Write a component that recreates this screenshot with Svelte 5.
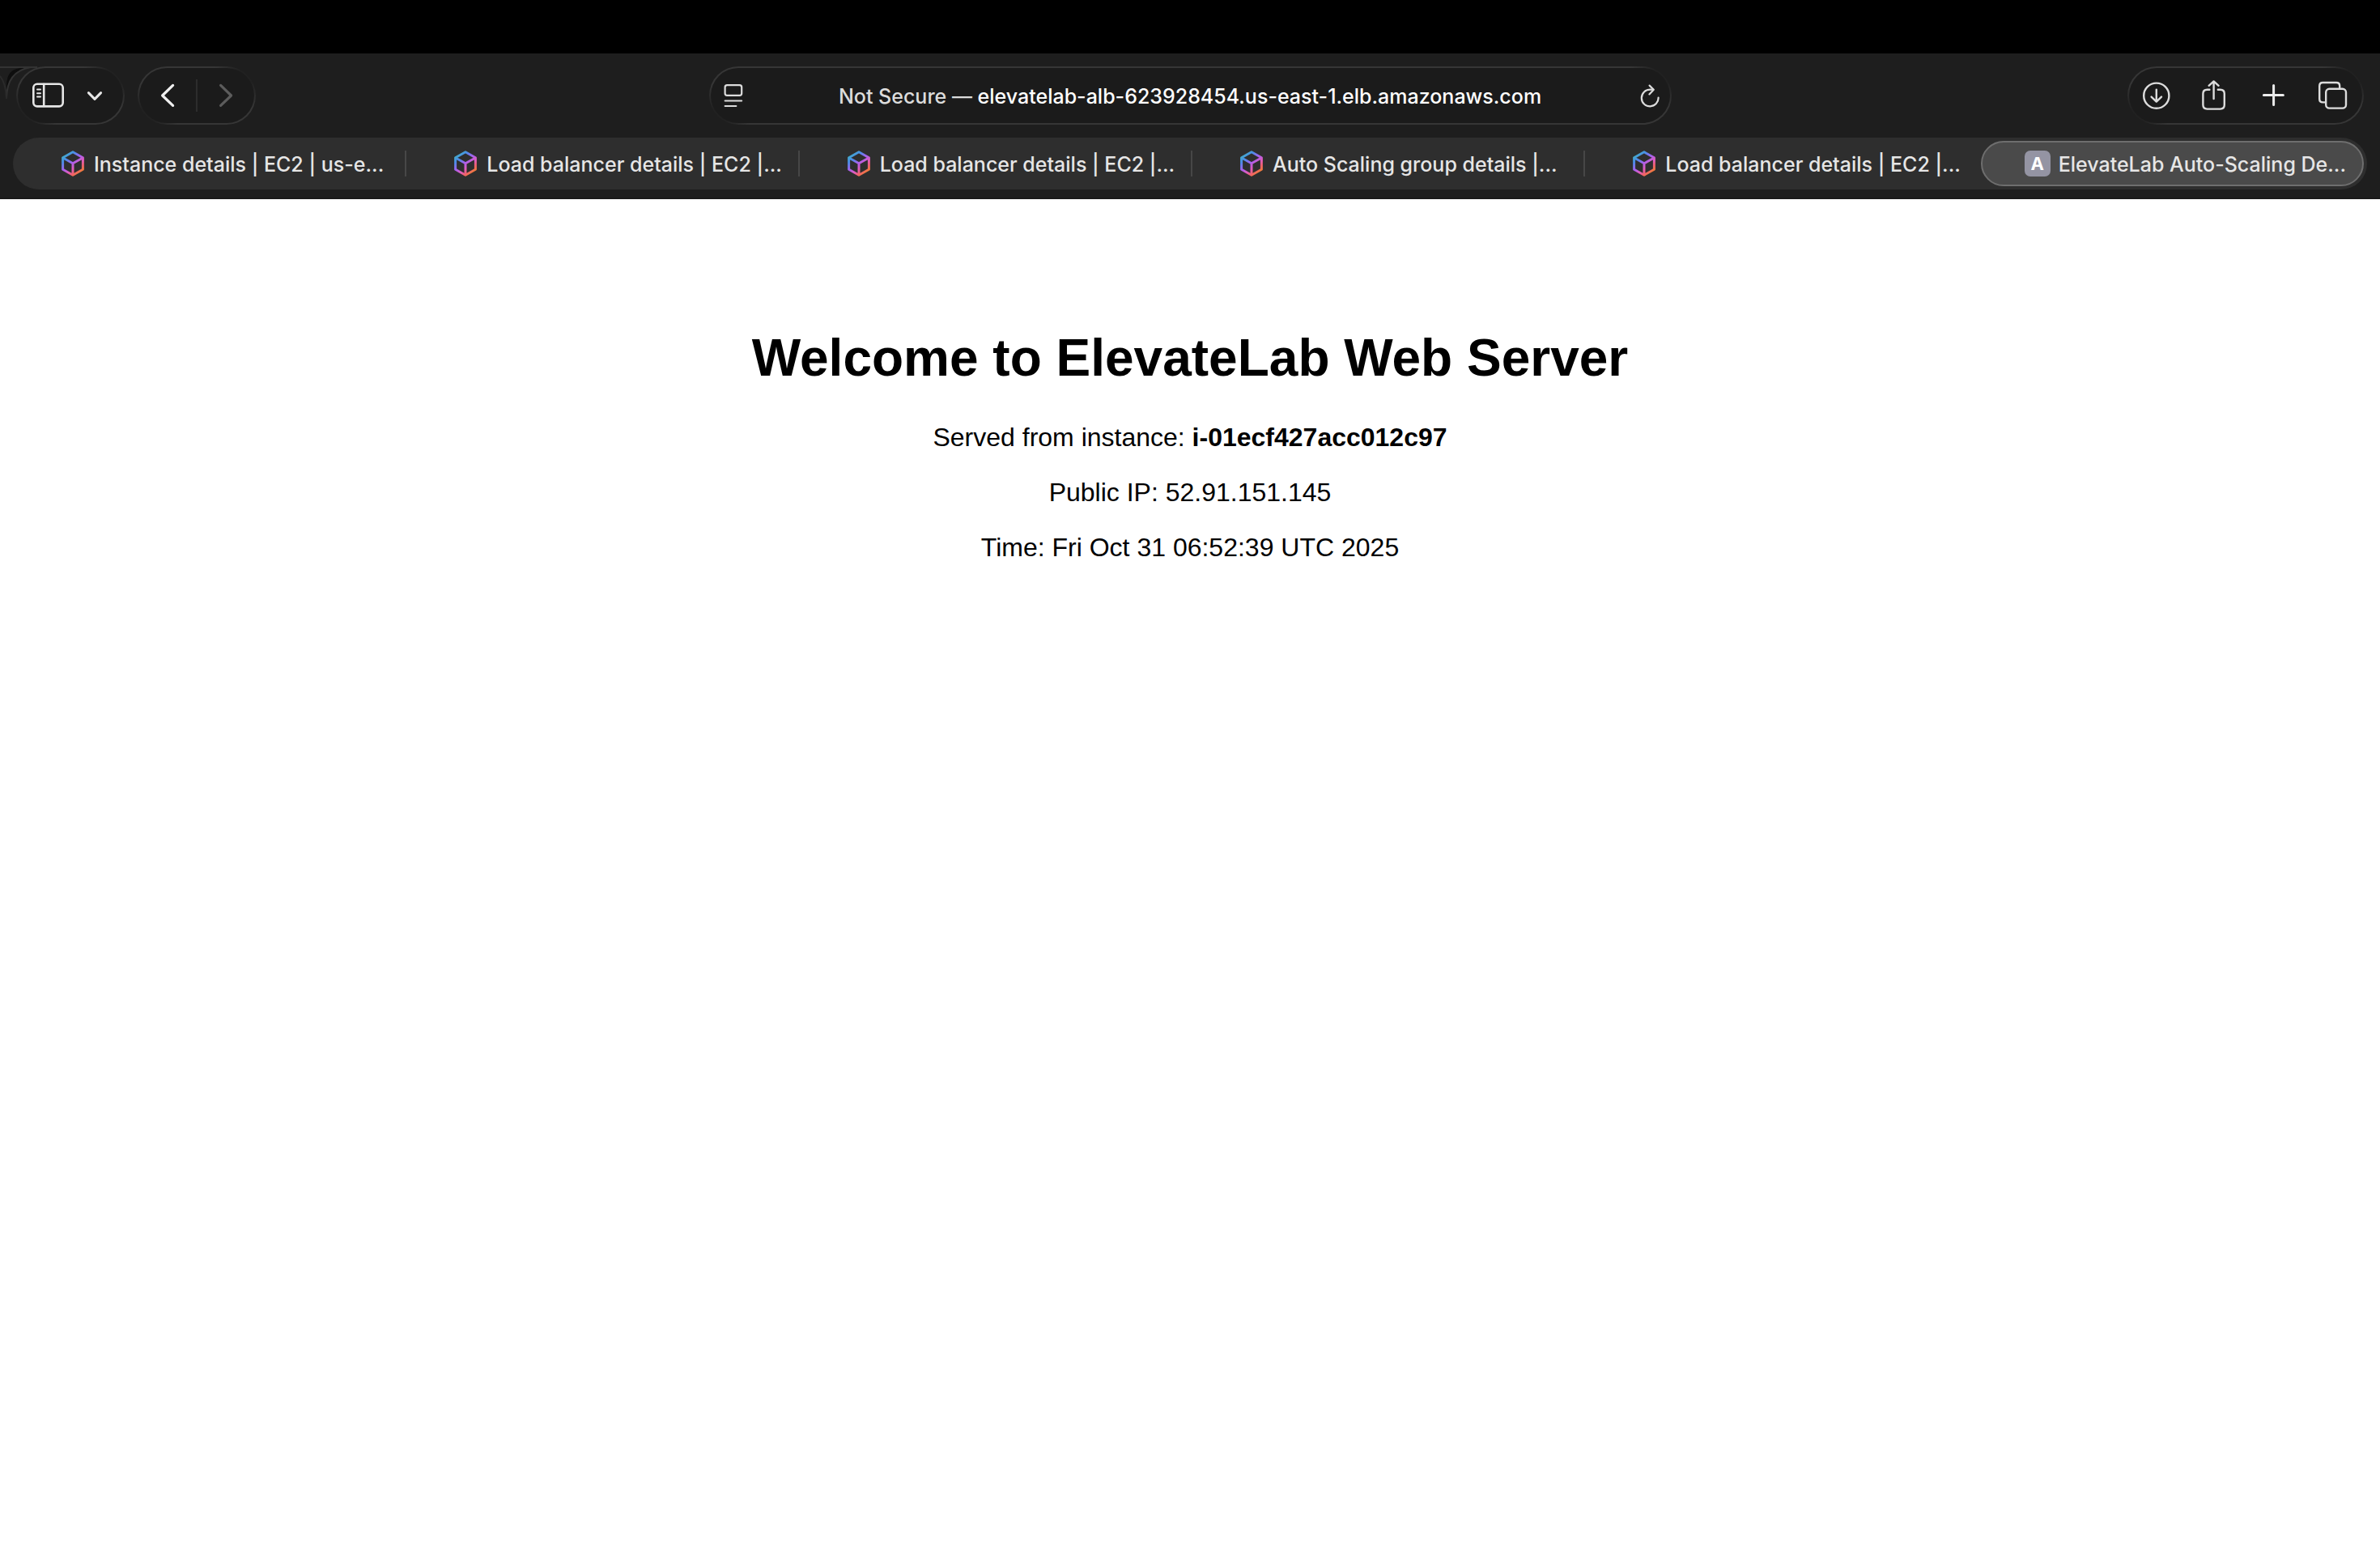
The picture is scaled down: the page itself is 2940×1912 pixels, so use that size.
<script>
  const tabs = [
    { title: 'Instance details | EC2 | us-e...', kind: 'aws' },
    { title: 'Load balancer details | EC2 |...', kind: 'aws' },
    { title: 'Load balancer details | EC2 |...', kind: 'aws' },
    { title: 'Auto Scaling group details |...', kind: 'aws' },
    { title: 'Load balancer details | EC2 |...', kind: 'aws' },
    { title: 'ElevateLab Auto-Scaling De...', kind: 'letter' },
  ];
  let active = $state(5);
</script>

<svelte:head><title>ElevateLab Auto-Scaling Demo</title></svelte:head>

<div class="window">
  <div class="menubar"></div>
  <header class="chrome">
    <svg class="edge" viewBox="0 0 50 72" aria-hidden="true">
      <path d="M8 24Q8 2 28 2H34Q14 8 8 30Z" fill="#0e0e0e" />
      <path d="M0 1H46M8 40Q8 6 38 1" fill="none" stroke="#333" stroke-width="2" />
      <path d="M0 12Q7 20 8 40" fill="none" stroke="#2a2a2a" stroke-width="2" />
    </svg>
    <div class="toolbar">
      <div class="side">
        <div class="pill">
          <button class="tool" aria-label="Show sidebar">
            <svg width="72" height="68" viewBox="0 0 72 68">
              <g fill="none" stroke="#e6e6e6" stroke-width="2.6" stroke-linecap="round">
                <rect x="19.3" y="19.8" width="36.4" height="27.6" rx="4.6" />
                <path d="M32.2 20V47" />
                <path d="M24 26.6H28M24 31.2H28M24 35.6H28" stroke-width="2" />
              </g>
            </svg>
          </button>
          <button class="tool narrow" aria-label="Tab groups">
            <svg width="58" height="68" viewBox="0 0 58 68">
              <path d="M15.4 30.6L23 38.4L30.6 30.6" fill="none" stroke="#e6e6e6" stroke-width="3" stroke-linecap="round" stroke-linejoin="round" />
            </svg>
          </button>
        </div>
        <div class="pill">
          <button class="tool nav" aria-label="Back">
            <svg width="70" height="68" viewBox="0 0 70 68">
              <path d="M41.6 21.4L28.6 34L41.6 46.4" fill="none" stroke="#f0f0f0" stroke-width="3.2" stroke-linecap="round" stroke-linejoin="round" />
            </svg>
          </button>
          <span class="rule"></span>
          <button class="tool nav" aria-label="Forward" disabled>
            <svg width="70" height="68" viewBox="0 0 70 68">
              <path d="M28.6 21.4L41.6 34L28.6 46.4" fill="none" stroke="#5c5c5c" stroke-width="3.2" stroke-linecap="round" stroke-linejoin="round" />
            </svg>
          </button>
        </div>
      </div>

      <div class="pill address">
        <button class="tool small" aria-label="Page menu">
          <svg width="58" height="68" viewBox="0 0 58 68">
            <g fill="none" stroke="#dcdcdc" stroke-width="2.2" stroke-linecap="round">
              <rect x="17.6" y="21.2" width="20.6" height="12.6" rx="2.6" />
              <path d="M17.6 40.6H38.2M17.6 47H31.4" stroke-width="2" />
            </g>
          </svg>
        </button>
        <button class="url"><span class="insecure">Not Secure —</span> elevatelab-alb-623928454.us-east-1.elb.amazonaws.com</button>
        <button class="tool small" aria-label="Reload">
          <svg width="58" height="68" viewBox="0 0 58 68">
            <g fill="none" stroke="#dcdcdc" stroke-width="2.2" stroke-linecap="round" stroke-linejoin="round">
              <path d="M43.6 36.6A10.4 10.4 0 1 1 33.2 26.6H37" />
              <path d="M32.6 21.6L37.8 26.8L32.4 32.4" />
            </g>
          </svg>
        </button>
      </div>

      <div class="side end">
        <div class="pill">
          <button class="tool" aria-label="Downloads">
            <svg width="72" height="68" viewBox="0 0 72 68">
              <g fill="none" stroke="#dcdcdc" stroke-width="2.4" stroke-linecap="round" stroke-linejoin="round">
                <circle cx="33.8" cy="34.2" r="15.6" />
                <path d="M33.8 26.6V41M27.6 35.6L33.8 41.6L40 35.6" />
              </g>
            </svg>
          </button>
          <button class="tool" aria-label="Share">
            <svg width="72" height="68" viewBox="0 0 72 68">
              <g fill="none" stroke="#dcdcdc" stroke-width="2.4" stroke-linecap="round" stroke-linejoin="round">
                <path d="M27.4 26.8H24.4Q19.4 26.8 19.4 31.8V45.6Q19.4 50.6 24.4 50.6H40.8Q45.8 50.6 45.8 45.6V31.8Q45.8 26.8 40.8 26.8H37.8" />
                <path d="M32.6 38V16.6M26.6 21.8L32.6 16.4L38.6 21.8" />
              </g>
            </svg>
          </button>
          <button class="tool" aria-label="New tab">
            <svg width="72" height="68" viewBox="0 0 72 68">
              <path d="M22.4 33.4H46.4M34.6 21.4V45.4" fill="none" stroke="#ececec" stroke-width="3" stroke-linecap="round" />
            </svg>
          </button>
          <button class="tool" aria-label="Tab overview">
            <svg width="72" height="68" viewBox="0 0 72 68">
              <g fill="none" stroke="#dcdcdc" stroke-width="2.4" stroke-linecap="round">
                <path d="M26 42.4H23.4Q19.2 42.4 19.2 38.2V22.2Q19.2 18 23.4 18H40Q44.2 18 44.2 22.2V24.4" />
                <rect x="27.2" y="25.8" width="24.8" height="23.8" rx="4.2" />
              </g>
            </svg>
          </button>
        </div>
      </div>
    </div>

    <nav class="tabs" aria-label="Tabs">
      {#each tabs as tab, i}
        {#if i > 0}
          <span class="divider" class:hidden={i === active || i - 1 === active}></span>
        {/if}
        <button class="tab" class:active={i === active} onclick={() => (active = i)}>
          {#if tab.kind === 'aws'}
            <svg class="favicon" viewBox="0 0 32 32" aria-hidden="true">
              <defs>
                <linearGradient id="cube{i}" x1="5" y1="3" x2="25" y2="27" gradientUnits="userSpaceOnUse">
                  <stop offset="0" stop-color="#41b8c0" />
                  <stop offset="0.25" stop-color="#4a8ce8" />
                  <stop offset="0.5" stop-color="#a860ee" />
                  <stop offset="0.7" stop-color="#e05cc0" />
                  <stop offset="0.85" stop-color="#ee6070" />
                  <stop offset="1" stop-color="#f07a3c" />
                </linearGradient>
              </defs>
              <path d="M16 1.8L28.4 8.8V23.2L16 30.2L3.6 23.2V8.8ZM3.8 9L16 15.8L28.2 9M16 15.8V30" fill="none" stroke="url(#cube{i})" stroke-width="3" stroke-linejoin="round" />
            </svg>
          {:else}
            <span class="letter">A</span>
          {/if}
          <span class="title">{tab.title}</span>
        </button>
      {/each}
    </nav>
  </header>

  <main>
    <h1>Welcome to ElevateLab Web Server</h1>
    <p>Served from instance: <strong>i-01ecf427acc012c97</strong></p>
    <p>Public IP: 52.91.151.145</p>
    <p>Time: Fri Oct 31 06:52:39 UTC 2025</p>
  </main>
</div>

<style>
  :global(body) {
    margin: 0;
    background: #fff;
  }
  .window {
    min-height: 100vh;
    background: #fff;
  }
  .menubar {
    height: 66px;
    background: #000;
  }
  .chrome {
    position: relative;
    padding: 16px 16px 10px;
    background: #1e1e1e;
    border-bottom: 2px solid #191919;
    font-family: Inter, 'Liberation Sans', sans-serif;
    font-weight: 500;
  }
  .edge {
    position: absolute;
    left: 0;
    top: 16px;
    width: 50px;
    height: 72px;
  }
  button {
    margin: 0;
    padding: 0;
    border: 0;
    background: none;
    color: inherit;
    font: inherit;
  }
  svg {
    display: block;
  }
  .toolbar {
    position: relative;
    display: grid;
    grid-template-columns: minmax(0, 1fr) 41% minmax(0, 1fr);
    padding: 0 4px;
  }
  .side {
    display: flex;
    gap: 16px;
  }
  .end {
    justify-content: flex-end;
  }
  .pill {
    display: flex;
    align-items: center;
    height: 68px;
    border: 2px solid transparent;
    border-radius: 36px;
    background:
      linear-gradient(#1b1b1b, #1b1b1b) padding-box,
      radial-gradient(circle at 100% 0, #212121 20px, transparent 50px) border-box,
      radial-gradient(circle at 0 100%, #212121 20px, transparent 50px) border-box,
      linear-gradient(#363636, #363636) border-box;
  }
  .tool {
    flex: none;
    width: 72px;
    height: 68px;
  }
  .narrow,
  .small {
    width: 58px;
  }
  .nav {
    width: 70px;
  }
  .rule {
    width: 2px;
    height: 40px;
    background: #2d2d2d;
  }
  .url {
    flex: 1;
    min-width: 0;
    padding-top: 2px;
    overflow: hidden;
    color: #fff;
    font-size: 25px;
    line-height: 32px;
    text-align: center;
    white-space: nowrap;
  }
  .insecure {
    color: #dcdcdc;
  }
  .tabs {
    display: flex;
    align-items: center;
    height: 56px;
    margin-top: 16px;
    padding: 4px;
    border-radius: 32px;
    background: #2e2e2e;
  }
  .tab {
    display: flex;
    flex: 1 1 0;
    align-items: center;
    gap: 10px;
    box-sizing: border-box;
    min-width: 0;
    height: 56px;
    padding-left: 52px;
    border: 2px solid transparent;
    border-radius: 28px;
    overflow: hidden;
    color: #e6e6e6;
    font-size: 25px;
    line-height: 32px;
    white-space: nowrap;
  }
  .title {
    padding-top: 2px;
  }
  .tab.active {
    border-color: #6e6e6e;
    background: #4a4a4a;
  }
  .divider {
    flex: none;
    width: 2px;
    height: 32px;
    margin: 0 3px 0 7px;
    background: #474747;
  }
  .divider.hidden {
    background: transparent;
  }
  .favicon,
  .letter {
    flex: none;
    width: 32px;
    height: 32px;
  }
  .letter {
    border-radius: 7px;
    background: #9494a3;
    color: #fff;
    font-size: 22px;
    font-weight: 700;
    text-align: center;
  }
  main {
    padding: 159px 16px;
    color: #000;
    font-family: Arial, 'Liberation Sans', sans-serif;
    font-size: 32px;
    line-height: 36px;
    text-align: center;
  }
  h1 {
    margin: 0 0 43px;
    font-size: 64px;
    line-height: 74px;
  }
  p {
    margin: 0 0 32px;
  }
</style>
